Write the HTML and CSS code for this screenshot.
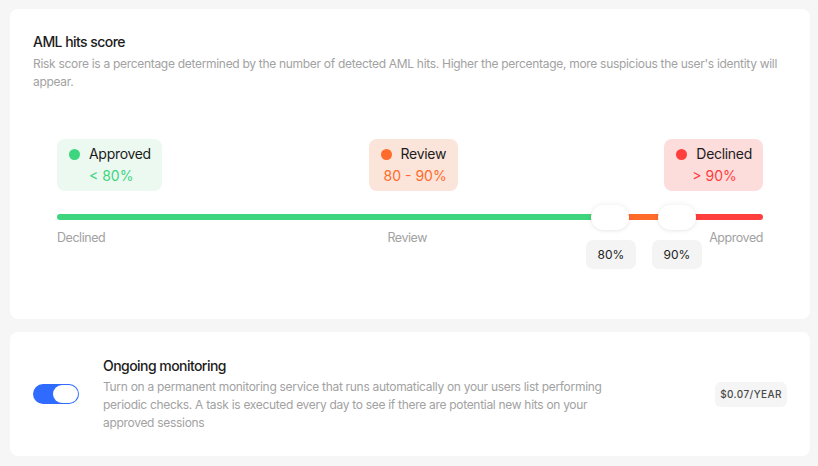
FILE: index.html
```html
<!DOCTYPE html>
<html>
<head>
<meta charset="utf-8">
<link rel="stylesheet" href="styles.css">
</head>
<body>
<div class="page">
  <section class="card score-card">
    <h3 class="title">AML hits score</h3>
    <p class="desc">Risk score is a percentage determined by the number of detected AML hits. Higher the percentage, more suspicious the user's identity will appear.</p>
    <div class="scale">
      <div class="badges">
        <div class="badge badge-green">
          <div class="badge-head"><span class="dot dot-green"></span>Approved</div>
          <div class="badge-val">&lt; 80%</div>
        </div>
        <div class="badge badge-orange">
          <div class="badge-head"><span class="dot dot-orange"></span>Review</div>
          <div class="badge-val">80 - 90%</div>
        </div>
        <div class="badge badge-red">
          <div class="badge-head"><span class="dot dot-red"></span>Declined</div>
          <div class="badge-val">&gt; 90%</div>
        </div>
      </div>
      <div class="slider">
        <div class="track">
          <div class="seg seg-green"></div>
          <div class="seg seg-orange"></div>
          <div class="seg seg-red"></div>
        </div>
        <div class="labels">
          <span>Declined</span>
          <span>Review</span>
          <span>Approved</span>
        </div>
        <div class="handle h1"></div>
        <div class="handle h2"></div>
        <div class="value v1">80%</div>
        <div class="value v2">90%</div>
      </div>
    </div>
  </section>
  <section class="card monitor-card">
    <div class="toggle"><span class="knob"></span></div>
    <div class="monitor-text">
      <h3 class="title">Ongoing monitoring</h3>
      <p class="desc">Turn on a permanent monitoring service that runs automatically on your users list performing periodic checks. A task is executed every day to see if there are potential new hits on your approved sessions</p>
    </div>
    <div class="price">$0.07/YEAR</div>
  </section>
</div>
</body>
</html>
```
FILE: styles.css
```css
* { box-sizing: border-box; }
html, body { margin: 0; padding: 0; }
body {
  background: #f6f6f6;
  font-family: Inter, "Noto Sans", sans-serif;
  width: 818px;
  height: 466px;
  overflow: hidden;
}
.page {
  padding: 9px 8px 0 10px;
  display: flex;
  flex-direction: column;
  gap: 13px;
}
.card {
  background: #fff;
  border-radius: 8px;
}
.score-card {
  height: 310px;
  padding: 24px 23px 0 23px;
}
.title {
  margin: 0;
  font-size: 14px;
  font-weight: 500;
  color: #1c1c1c;
  line-height: 18px;
  letter-spacing: -0.55px;
}
.desc {
  margin: 4px 0 0 0;
  font-size: 12px;
  line-height: 18px;
  color: #a2a2a2;
  font-weight: 400;
  letter-spacing: -0.3px;
}
.scale {
  padding: 0 24px;
  margin-top: 48px;
}
.badges {
  display: flex;
  justify-content: space-between;
  align-items: flex-start;
}
.badge {
  border-radius: 8px;
  padding: 5px 11px 6px 12px;
  height: 52px;
}
.badge-head {
  display: flex;
  align-items: center;
  font-size: 14px;
  color: #1c1c1c;
  line-height: 20px;
  letter-spacing: -0.3px;
}
.dot {
  width: 11px;
  height: 11px;
  border-radius: 50%;
  margin-right: 9px;
  flex: none;
}
.badge-val {
  font-size: 14px;
  line-height: 20px;
  margin-top: 2px;
  padding-left: 20px;
  letter-spacing: 0;
}
.badge-green { background: #ecf9f0; }
.badge-orange { background: #fbe5da; }
.badge-red { background: #fddcdc; }
.dot-green { background: #3ed57f; }
.dot-orange { background: #ff6b2b; }
.dot-red { background: #ff3e3e; }
.badge-green .badge-val { color: #3ed57f; }
.badge-orange .badge-val { color: #ff6b2b; }
.badge-red .badge-val { color: #ff3e3e; }
.badge-orange .badge-val { padding-left: 3px; }
.badge-red .badge-val { padding-left: 16px; }

.slider {
  position: relative;
  margin-top: 23px;
  height: 60px;
}
.track {
  display: flex;
  height: 6px;
  border-radius: 3px;
  overflow: hidden;
}
.seg-green { background: #3ed57f; width: 534px; }
.seg-orange { background: #ff6b2b; width: 105px; }
.seg-red { background: #ff3e3e; flex: 1; }
.labels {
  display: flex;
  justify-content: space-between;
  margin-top: 10px;
  font-size: 12.5px;
  color: #a2a2a2;
  line-height: 16px;
  letter-spacing: -0.45px;
}
.handle {
  position: absolute;
  top: -9px;
  width: 38px;
  height: 25px;
  border-radius: 13px;
  background: #fff;
  box-shadow: 0 0 6px rgba(0,0,0,0.07), 0 1px 3px rgba(0,0,0,0.05);
}
.h1 { left: 534px; }
.h2 { left: 601px; }
.value {
  position: absolute;
  top: 26px;
  width: 50px;
  height: 29px;
  border-radius: 7px;
  background: #f4f4f4;
  font-size: 12px;
  color: #222;
  display: flex;
  align-items: center;
  justify-content: center;
}
.v1 { left: 529px; }
.v2 { left: 595px; }

.monitor-card {
  height: 124px;
  display: flex;
  align-items: center;
  padding: 0 23px;
}
.toggle {
  width: 46px;
  height: 20px;
  border-radius: 10px;
  background: #2f6bff;
  position: relative;
  flex: none;
  margin-right: 24px;
}
.knob {
  position: absolute;
  right: 1px;
  top: 1px;
  width: 25px;
  height: 18px;
  border-radius: 9px;
  background: #fff;
}
.monitor-text {
  width: 530px;
  padding-top: 1px;
}
.monitor-text .desc { margin-top: 3px; }
.price {
  margin-left: auto;
  background: #f5f5f5;
  border-radius: 6px;
  height: 25px;
  width: 72px;
  display: flex;
  align-items: center;
  justify-content: center;
  font-size: 10px;
  font-weight: 500;
  letter-spacing: 0.4px;
  color: #4a4a4a;
}
```
